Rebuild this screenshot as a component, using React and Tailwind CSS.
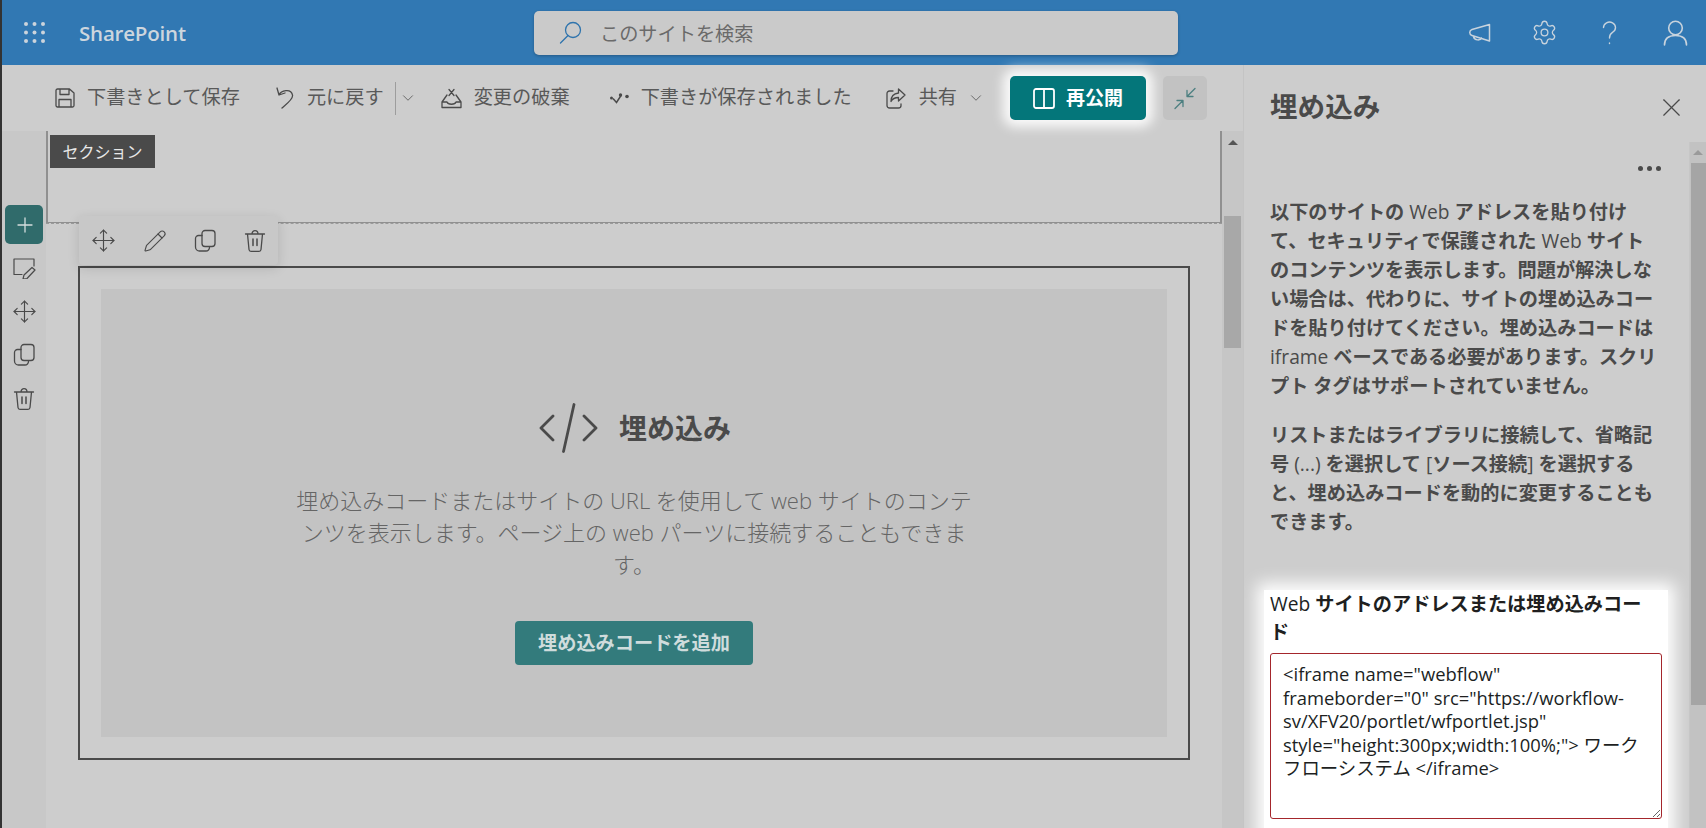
import React from 'react';
import { Settings, Move, Pencil, X, ChevronDown } from 'lucide-react';

const Ico = ({ w, h, vb, c = '#4a4a4a', sw = 1.3, className = '', children }) => (
  <svg width={w} height={h} viewBox={vb || `0 0 ${w} ${h}`} fill="none" stroke={c} strokeWidth={sw} strokeLinecap="round" strokeLinejoin="round" className={`shrink-0 ${className}`}>{children}</svg>
);

const CopyI = () => (
  <Ico w={24} h={24}>
    <rect x="9" y="1.5" width="13" height="16" rx="3" />
    <path d="M9 6.5H5.5a3 3 0 0 0-3 3v8.500a4 4 0 0 0 4 4H13a3.500 3.500 0 0 0 3.500-3.500" />
  </Ico>
);
const TrashI = () => (
  <Ico w={22} h={24}>
    <path d="M1.500 5h19M8 5c0-4.500 6-4.500 6 0M3.500 5l1.500 15.500a2 2 0 0 0 2 1.800h8a2 2 0 0 0 2-1.800L18.500 5" />
    <path d="M9 10v6.500M13 10v6.500" strokeWidth="1.500" />
  </Ico>
);
const MoveI = () => <Move size={25} strokeWidth={1.1} color="#4a4a4a" className="shrink-0" />;
const L = ({ children }) => <span className="font-medium">{children}</span>;

const Tool = ({ ml = '', icon, gap = 'gap-[13px]', children }) => (
  <div className={`flex items-center ${ml} ${gap} shrink-0`}>
    {icon}
    <span className="-mt-[2px] text-[19.2px] leading-none whitespace-nowrap text-[#595959]">{children}</span>
  </div>
);

export default function App() {
  return (
    <div className="flex h-[828px] w-[1706px] overflow-hidden bg-[#cdcdcd] font-['Open_Sans','Noto_Sans_CJK_JP',sans-serif]">
      <div className="w-[2px] shrink-0 bg-[#333333]" />
      <div className="flex min-w-0 flex-1 flex-col">
        {/* suite bar */}
        <header className="flex h-[65px] shrink-0 items-center bg-[#3178b3] pl-[22px]">
          <svg width="21" height="21" viewBox="0 0 21 21" fill="#ccd4dc" className="shrink-0">
            <circle cx="2" cy="2" r="2" /><circle cx="10.500" cy="2" r="2" /><circle cx="19" cy="2" r="2" />
            <circle cx="2" cy="10.500" r="2" /><circle cx="10.500" cy="10.500" r="2" /><circle cx="19" cy="10.500" r="2" />
            <circle cx="2" cy="19" r="2" /><circle cx="10.500" cy="19" r="2" /><circle cx="19" cy="19" r="2" />
          </svg>
          <div className="ml-[34px] mt-[2px] w-[108px] shrink-0 text-[20.5px] font-semibold tracking-[-0.2px] text-[#cdd6de]">SharePoint</div>
          <div className="ml-[347px] flex h-[44px] w-[644px] shrink-0 items-center rounded-[5px] bg-[#cacaca] pl-[25px] shadow-[0_1px_3px_rgba(0,0,0,0.25)]">
            <Ico w={23} h={23} c="#2f74ad" sw={1.3}>
              <circle cx="14" cy="9" r="7.500" />
              <path d="M9 14.500L1.500 22" />
            </Ico>
            <span className="ml-[18px] mt-[2px] text-[19.2px] leading-none text-[#6a6a6a]">このサイトを検索</span>
          </div>
          <div className="ml-[290px] flex items-center">
            <Ico w={23} h={20} c="#c8d3dd" sw={1.5}>
              <path d="M21.500 1.500L4 6.500C1 7.500 1 11.500 4 12.500L21.500 18zM5.500 13.500c1 4.500 7 4 8 1.500" />
            </Ico>
            <Settings size={27} strokeWidth={1.15} color="#c8d3dd" className="ml-[40px] shrink-0" />
            <Ico w={15} h={24} c="#c8d3dd" sw={1.400} className="ml-[44px]">
              <path d="M1.500 6.500a6 5.500 0 1 1 9 4.800C8 12.800 7.500 14 7.500 17M7.500 22v.5" />
            </Ico>
            <Ico w={25} h={26} c="#c8d3dd" sw={1.600} className="ml-[46px]">
              <circle cx="12.500" cy="8" r="6.800" />
              <path d="M1.500 25c0-6 4-9.500 11-9.500s11 3.500 11 9.500" />
            </Ico>
          </div>
        </header>

        <div className="flex min-h-0 flex-1">
          {/* editor column */}
          <div className="flex min-w-0 flex-1 flex-col">
            <div className="flex h-[66px] shrink-0 items-center pl-[53px]">
              <Tool gap="gap-[12px]" icon={
                <Ico w={20} h={20}>
                  <path d="M3 1h11.500L19 5v12.500a1.500 1.500 0 0 1-1.500 1.500h-15A1.500 1.500 0 0 1 1 17.500v-15A1.500 1.500 0 0 1 2.500 1zM5 1v5.500h9V1M4 19v-7.500h12V19" />
                </Ico>}>下書きとして保存</Tool>
              <Tool ml="ml-[36px]" icon={
                <Ico w={18} h={22}>
                  <path d="M1 1l2 7 6-2M3 8C5 3.500 15 1 16.500 8c1 4-6 9-10.500 13" />
                </Ico>}>元に戻す</Tool>
              <div className="ml-[11px] h-[33px] w-px shrink-0 bg-[#9d9d9d]" />
              <ChevronDown size={18} strokeWidth={1.1} color="#555555" className="ml-[3px] shrink-0" />
              <Tool ml="ml-[24px]" gap="gap-[12px]" icon={
                <Ico w={21} h={21}>
                  <path d="M6 7L1 14v5.500h19V14L15 7M8 1.500l5 6M13 1.500l-5 6M1 14h5c1 3 8 3 9 0h5" />
                </Ico>}>変更の破棄</Tool>
              <Tool ml="ml-[40px]" gap="gap-[12px]" icon={
                <svg width="19" height="12" viewBox="0 0 19 12" className="shrink-0">
                  <circle cx="1.500" cy="6" r="1.500" fill="#4a4a4a" />
                  <path d="M3 6.500L6.500 10.500L11 3.500" fill="none" stroke="#4a4a4a" strokeWidth="1.500" />
                  <circle cx="10.500" cy="3" r="1.700" fill="#4a4a4a" />
                  <circle cx="17" cy="4.500" r="1.800" fill="#4a4a4a" />
                </svg>}>下書きが保存されました</Tool>
              <Tool ml="ml-[34px]" icon={
                <Ico w={20} h={21}>
                  <path d="M7 3H3.500A2.500 2.500 0 0 0 1 5.500v12A2.500 2.500 0 0 0 3.500 20h9a2.500 2.500 0 0 0 2.500-2.500V16" />
                  <path d="M12.500 1l6.500 6-6.500 6V9.500c-3.500 0-6 1-7.500 4 0-5 3-8 7.500-8.500z" />
                </Ico>}>共有</Tool>
              <ChevronDown size={18} strokeWidth={1.1} color="#555555" className="ml-[10px] shrink-0" />
              <button className="ml-[25px] flex h-[44px] w-[136px] shrink-0 items-center justify-center gap-[11px] rounded-[5px] bg-[#04767a] text-[19px] font-bold text-white shadow-[0_0_12px_7px_rgba(255,255,255,0.9)]">
                <Ico w={22} h={21} c="#ffffff" sw={1.800}>
                  <rect x="1" y="1" width="20" height="19" rx="2" />
                  <path d="M11 1v19" />
                </Ico>
                再公開
              </button>
              <button className="ml-[17px] flex h-[44px] w-[44px] shrink-0 items-center justify-center rounded-[5px] bg-[#c2c2c2]">
                <Ico w={22} h={23} c="#4c7f80" sw={1.300}>
                  <path d="M21 1.500L13 9.500M13 3.500v6h6M1 21.500L9 13.500M3 13.500h6v6" />
                </Ico>
              </button>
            </div>

            <div className="flex min-h-0 flex-1">
              {/* rail */}
              <aside className="flex w-[44px] shrink-0 flex-col items-center bg-[#c8c8c8] pt-[74px]">
                <div className="flex h-[39px] w-[38px] shrink-0 items-center justify-center rounded-[5px] bg-[#306b6b] pl-px">
                  <Ico w={16} h={16} c="#d5dede" sw={1.300}><path d="M8 1v14M1 8h14" /></Ico>
                </div>
                <div className="mt-[14px]">
                  <Ico w={23} h={21} sw={1.200}>
                    <path d="M21 8V1H1v15.500h8M19 9.500l3 2.500-8 8.500-4 .5 1-4z" />
                  </Ico>
                </div>
                <div className="mt-[20px]"><MoveI /></div>
                <div className="mt-[19px]"><CopyI /></div>
                <div className="mt-[20px]"><TrashI /></div>
              </aside>

              {/* canvas */}
              <main className="relative min-w-0 flex-1">
                <section className="h-[92px] border-x-2 border-b border-[#909090] pl-[2px] pt-[4px]">
                  <div className="flex h-[33px] w-[105px] items-center justify-center bg-[#4a4a4a] text-[16px] leading-none text-[#e8e8e8]">セクション</div>
                </section>
                <div className="h-px border-b border-dashed border-[#9a9a9a]" />
                <div className="absolute left-[33px] top-[85px] z-10 flex h-[49px] w-[199px] items-center justify-between rounded-[4px] bg-[#c8c8c8] px-[12px] shadow-[0_3px_12px_rgba(0,0,0,0.13)]">
                  <MoveI />
                  <Pencil size={24} strokeWidth={1.100} color="#4a4a4a" className="shrink-0" />
                  <CopyI />
                  <TrashI />
                </div>
                <div className="ml-[32px] mt-[42px] h-[494px] w-[1112px] border-2 border-[#4a4a4a] p-[21px]">
                  <div className="flex h-full flex-col items-center bg-[#c3c3c3] pt-[114px]">
                    <div className="flex h-[50px] items-center gap-[21px] pl-[2px]">
                      <Ico w={59} h={50} sw={2.800}>
                        <path d="M14 13L2 25l12 12M45 13l12 12-12 12M35 1.500L24.500 48.500" />
                      </Ico>
                      <span className="text-[28px] font-bold leading-none text-[#4a4a4a]">埋め込み</span>
                    </div>
                    <p className="mt-[31px] text-center text-[22px] font-light leading-[32px] whitespace-nowrap text-[#656565]">
                      埋め込みコードまたはサイトの URL を使用して web サイトのコンテ<br />
                      ンツを表示します。ページ上の web パーツに接続することもできま<br />
                      す。
                    </p>
                    <button className="mt-[41px] flex h-[44px] w-[238px] items-center justify-center rounded-[4px] bg-[#337b7c] text-[19.200px] font-bold text-[#cfdcdc]">埋め込みコードを追加</button>
                  </div>
                </div>
              </main>

              {/* page scrollbar */}
              <div className="flex w-[21px] shrink-0 flex-col items-center bg-[#c6c6c6] pt-[9px]">
                <div className="h-0 w-0 border-x-[5px] border-b-[5px] border-x-transparent border-b-[#555555]" />
                <div className="mt-[71px] h-[132px] w-[17px] bg-[#a8a8a8]" />
              </div>
            </div>
          </div>

          {/* property pane */}
          <aside className="flex w-[463px] shrink-0 flex-col border-l border-[#c4c4c4] bg-[#cdcdcd]">
            <div className="flex h-[77px] shrink-0 items-center justify-between pl-[26px] pr-[19px] pt-[7px]">
              <h2 className="text-[27.6px] font-bold leading-none text-[#4a4a4a]">埋め込み</h2>
              <X size={31} strokeWidth={0.9} color="#4a4a4a" />
            </div>
            <div className="flex min-h-0 flex-1">
              <div className="min-w-0 flex-1 overflow-hidden pl-[26px] pr-[27px]">
                <div className="flex h-[44px] items-end justify-end pb-[15px] pr-[1px]">
                  <span className="flex gap-[4px]">
                    <i className="h-[5px] w-[5px] rounded-full bg-[#4a4a4a]" />
                    <i className="h-[5px] w-[5px] rounded-full bg-[#4a4a4a]" />
                    <i className="h-[5px] w-[5px] rounded-full bg-[#4a4a4a]" />
                  </span>
                </div>
                <div className="mt-[11px] text-[19.200px] font-semibold leading-[29px] whitespace-nowrap text-[#4a4a4a]">
                  <p>
                    以下のサイトの <L>Web</L> アドレスを貼り付け<br />
                    て、セキュリティで保護された <L>Web</L> サイト<br />
                    のコンテンツを表示します。問題が解決しな<br />
                    い場合は、代わりに、サイトの埋め込みコー<br />
                    ドを貼り付けてください。埋め込みコードは<br />
                    <L>iframe</L> ベースである必要があります。スクリ<br />
                    プト タグはサポートされていません。
                  </p>
                  <p className="mt-[20px]">
                    リストまたはライブラリに接続して、省略記<br />
                    号 <L>(...)</L> を選択して <L>[</L>ソース接続<L>]</L> を選択する<br />
                    と、埋め込みコードを動的に変更することも<br />
                    できます。
                  </p>
                </div>
                <div className="-mx-[6px] mt-[54px] h-[260px] bg-white px-[6px] pt-0 shadow-[0_0_16px_7px_#ffffff]">
                  <div className="text-[19.200px] font-semibold leading-[28px] text-[#201f1f] whitespace-nowrap">
                    <L>Web</L> サイトのアドレスまたは埋め込みコー<br />ド
                  </div>
                  <textarea
                    readOnly
                    className="mt-[7px] block h-[166px] w-[392px] resize-y rounded-[3px] border border-[#a4262c] bg-white pl-[12px] pt-[8px] text-[18.400px] leading-[23.500px] text-[#201f1f] outline-none"
                    defaultValue={'<iframe name="webflow"\nframeborder="0" src="https://workflow-\nsv/XFV20/portlet/wfportlet.jsp"\nstyle="height:300px;width:100%;"> ワーク\nフローシステム </iframe>'}
                  />
                </div>
              </div>
              <div className="flex w-[17px] shrink-0 flex-col items-end border-l border-[#c6c6c6] bg-[#c2c2c2]">
                <div className="flex h-[21px] w-full items-center justify-center">
                  <div className="h-0 w-0 border-x-[5px] border-b-[5px] border-x-transparent border-b-[#9a9a9a]" />
                </div>
                <div className="h-[542px] w-[15px] bg-[#a5a5a5]" />
              </div>
            </div>
          </aside>
        </div>
      </div>
    </div>
  );
}
